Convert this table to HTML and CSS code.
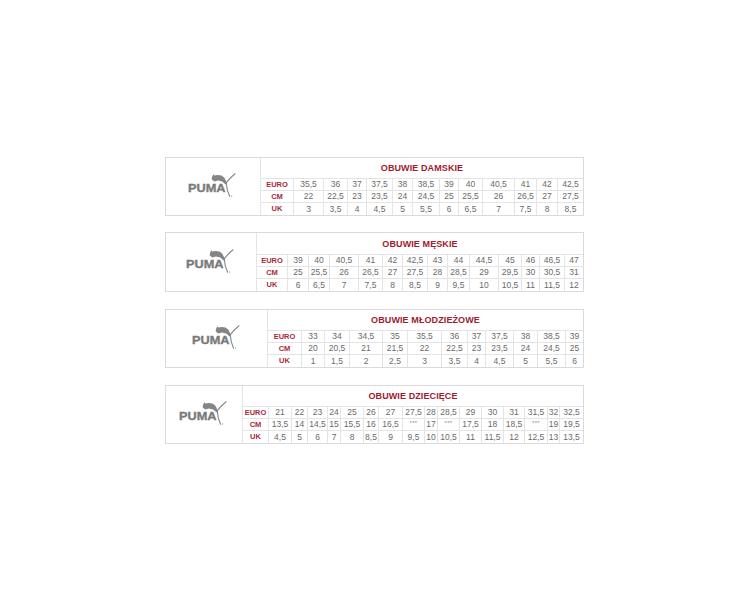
FILE: index.html
```html
<!DOCTYPE html>
<html lang="pl">
<head>
<meta charset="utf-8">
<title>PUMA – tabela rozmiarów</title>
<link rel="stylesheet" href="styles.css">
</head>
<body>
<div class="wrap">

  <div class="chart t1">
    <div class="logo">
      <svg class="puma" width="50" height="27" viewBox="0 0 50 27">
        <text x="0" y="18.9" textLength="37.5" lengthAdjust="spacingAndGlyphs" class="puma-text">PUMA</text>
        <path class="cat" d="M23.6,6.2 L24.2,3.4 L25.4,1.2 L26.4,2.6 L29.5,2.1 L33.4,2.6 L36.2,4.6 L39.2,10.2 L37.6,11.6 L34.2,8.4 L30,7.6 L26.2,8.4 Z"/>
        <path class="cat-line" d="M37.8,10.4 Q41.8,5 47,0.8"/>
        <path class="cat-line" d="M38.4,10.8 Q38.6,17 41.6,23.2"/>
        <circle class="reg" cx="43.6" cy="23" r="0.8"/>
      </svg>
    </div>
    <div class="title">OBUWIE DAMSKIE</div>
    <div class="lbl">EURO</div><div class="v">35,5</div><div class="v">36</div><div class="v">37</div><div class="v">37,5</div><div class="v">38</div><div class="v">38,5</div><div class="v">39</div><div class="v">40</div><div class="v">40,5</div><div class="v">41</div><div class="v">42</div><div class="v">42,5</div>
    <div class="lbl">CM</div><div class="v">22</div><div class="v">22,5</div><div class="v">23</div><div class="v">23,5</div><div class="v">24</div><div class="v">24,5</div><div class="v">25</div><div class="v">25,5</div><div class="v">26</div><div class="v">26,5</div><div class="v">27</div><div class="v">27,5</div>
    <div class="lbl">UK</div><div class="v">3</div><div class="v">3,5</div><div class="v">4</div><div class="v">4,5</div><div class="v">5</div><div class="v">5,5</div><div class="v">6</div><div class="v">6,5</div><div class="v">7</div><div class="v">7,5</div><div class="v">8</div><div class="v">8,5</div>
  </div>

  <div class="chart t2">
    <div class="logo">
      <svg class="puma" width="50" height="27" viewBox="0 0 50 27">
        <text x="0" y="18.9" textLength="37.5" lengthAdjust="spacingAndGlyphs" class="puma-text">PUMA</text>
        <path class="cat" d="M23.6,6.2 L24.2,3.4 L25.4,1.2 L26.4,2.6 L29.5,2.1 L33.4,2.6 L36.2,4.6 L39.2,10.2 L37.6,11.6 L34.2,8.4 L30,7.6 L26.2,8.4 Z"/>
        <path class="cat-line" d="M37.8,10.4 Q41.8,5 47,0.8"/>
        <path class="cat-line" d="M38.4,10.8 Q38.6,17 41.6,23.2"/>
        <circle class="reg" cx="43.6" cy="23" r="0.8"/>
      </svg>
    </div>
    <div class="title">OBUWIE MĘSKIE</div>
    <div class="lbl">EURO</div><div class="v">39</div><div class="v">40</div><div class="v">40,5</div><div class="v">41</div><div class="v">42</div><div class="v">42,5</div><div class="v">43</div><div class="v">44</div><div class="v">44,5</div><div class="v">45</div><div class="v">46</div><div class="v">46,5</div><div class="v">47</div>
    <div class="lbl">CM</div><div class="v">25</div><div class="v">25,5</div><div class="v">26</div><div class="v">26,5</div><div class="v">27</div><div class="v">27,5</div><div class="v">28</div><div class="v">28,5</div><div class="v">29</div><div class="v">29,5</div><div class="v">30</div><div class="v">30,5</div><div class="v">31</div>
    <div class="lbl">UK</div><div class="v">6</div><div class="v">6,5</div><div class="v">7</div><div class="v">7,5</div><div class="v">8</div><div class="v">8,5</div><div class="v">9</div><div class="v">9,5</div><div class="v">10</div><div class="v">10,5</div><div class="v">11</div><div class="v">11,5</div><div class="v">12</div>
  </div>

  <div class="chart t3">
    <div class="logo">
      <svg class="puma" width="50" height="27" viewBox="0 0 50 27">
        <text x="0" y="18.9" textLength="37.5" lengthAdjust="spacingAndGlyphs" class="puma-text">PUMA</text>
        <path class="cat" d="M23.6,6.2 L24.2,3.4 L25.4,1.2 L26.4,2.6 L29.5,2.1 L33.4,2.6 L36.2,4.6 L39.2,10.2 L37.6,11.6 L34.2,8.4 L30,7.6 L26.2,8.4 Z"/>
        <path class="cat-line" d="M37.8,10.4 Q41.8,5 47,0.8"/>
        <path class="cat-line" d="M38.4,10.8 Q38.6,17 41.6,23.2"/>
        <circle class="reg" cx="43.6" cy="23" r="0.8"/>
      </svg>
    </div>
    <div class="title">OBUWIE MŁODZIEŻOWE</div>
    <div class="lbl">EURO</div><div class="v">33</div><div class="v">34</div><div class="v">34,5</div><div class="v">35</div><div class="v">35,5</div><div class="v">36</div><div class="v">37</div><div class="v">37,5</div><div class="v">38</div><div class="v">38,5</div><div class="v">39</div>
    <div class="lbl">CM</div><div class="v">20</div><div class="v">20,5</div><div class="v">21</div><div class="v">21,5</div><div class="v">22</div><div class="v">22,5</div><div class="v">23</div><div class="v">23,5</div><div class="v">24</div><div class="v">24,5</div><div class="v">25</div>
    <div class="lbl">UK</div><div class="v">1</div><div class="v">1,5</div><div class="v">2</div><div class="v">2,5</div><div class="v">3</div><div class="v">3,5</div><div class="v">4</div><div class="v">4,5</div><div class="v">5</div><div class="v">5,5</div><div class="v">6</div>
  </div>

  <div class="chart t4">
    <div class="logo">
      <svg class="puma" width="50" height="27" viewBox="0 0 50 27">
        <text x="0" y="18.9" textLength="37.5" lengthAdjust="spacingAndGlyphs" class="puma-text">PUMA</text>
        <path class="cat" d="M23.6,6.2 L24.2,3.4 L25.4,1.2 L26.4,2.6 L29.5,2.1 L33.4,2.6 L36.2,4.6 L39.2,10.2 L37.6,11.6 L34.2,8.4 L30,7.6 L26.2,8.4 Z"/>
        <path class="cat-line" d="M37.8,10.4 Q41.8,5 47,0.8"/>
        <path class="cat-line" d="M38.4,10.8 Q38.6,17 41.6,23.2"/>
        <circle class="reg" cx="43.6" cy="23" r="0.8"/>
      </svg>
    </div>
    <div class="title">OBUWIE DZIECIĘCE</div>
    <div class="lbl">EURO</div><div class="v">21</div><div class="v">22</div><div class="v">23</div><div class="v">24</div><div class="v">25</div><div class="v">26</div><div class="v">27</div><div class="v">27,5</div><div class="v">28</div><div class="v">28,5</div><div class="v">29</div><div class="v">30</div><div class="v">31</div><div class="v">31,5</div><div class="v">32</div><div class="v">32,5</div>
    <div class="lbl">CM</div><div class="v">13,5</div><div class="v">14</div><div class="v">14,5</div><div class="v">15</div><div class="v">15,5</div><div class="v">16</div><div class="v">16,5</div><div class="v star">***</div><div class="v">17</div><div class="v star">***</div><div class="v">17,5</div><div class="v">18</div><div class="v">18,5</div><div class="v star">***</div><div class="v">19</div><div class="v">19,5</div>
    <div class="lbl">UK</div><div class="v">4,5</div><div class="v">5</div><div class="v">6</div><div class="v">7</div><div class="v">8</div><div class="v">8,5</div><div class="v">9</div><div class="v">9,5</div><div class="v">10</div><div class="v">10,5</div><div class="v">11</div><div class="v">11,5</div><div class="v">12</div><div class="v">12,5</div><div class="v">13</div><div class="v">13,5</div>
  </div>

</div>
</body>
</html>
```

FILE: styles.css
```css
html, body {
  margin: 0;
  padding: 0;
  background: #ffffff;
}

body {
  font-family: "Liberation Sans", Arial, sans-serif;
}

.wrap {
  display: flex;
  flex-direction: column;
  gap: 17px;
  padding: 157px 0 0 165px;
}

.chart {
  box-sizing: border-box;
  width: 419px;
  display: grid;
  gap: 1px;
  background: #e4e4e4;
  border: 1px solid #dadada;
}

.t1 {
  margin-bottom: -1px;
  grid-template-columns: 94px 32px 29px 23px 18px 25px 19px 26px 18px 23px 31px 21px 20px 25px;
  grid-template-rows: 20px 11px 11px 12px;
}

.t2 {
  grid-template-columns: 90px 30px 20px 20px 28px 23px 19px 24px 19px 21px 28px 22px 17px 24px 18px;
  grid-template-rows: 21px 11px 11px 12px;
}

.t3 {
  grid-template-columns: 101px 33px 22px 24px 32px 24px 33px 25px 17px 27px 23px 27px 17px;
  grid-template-rows: 20px 11px 11px 12px;
}

.t4 {
  grid-template-columns: 76px 25px 22px 15px 19px 12px 22px 14px 23px 21px 12px 21px 21px 21px 20px 22px 11px 23px;
  grid-template-rows: 20px 11px 11px 12px;
}

.chart > div {
  background: #ffffff;
  display: flex;
  align-items: center;
  justify-content: center;
  white-space: nowrap;
  overflow: hidden;
}

.logo {
  grid-column: 1;
  grid-row: 1 / 5;
}

.puma {
  display: block;
}

.puma-text {
  font-family: "Liberation Sans", Arial, sans-serif;
  font-weight: bold;
  font-size: 11.4px;
  fill: #7a7a7a;
  stroke: #7a7a7a;
  stroke-width: 0.35;
}

.cat {
  fill: #858585;
}

.cat-line {
  fill: none;
  stroke: #858585;
  stroke-width: 1.1;
  stroke-linecap: round;
}

.reg {
  fill: #b5b5b5;
}

.title {
  grid-row: 1;
  grid-column: 2 / -1;
  font-size: 9px;
  font-weight: bold;
  color: #a11a2d;
  letter-spacing: 0.1px;
}

.lbl {
  font-size: 7.5px;
  font-weight: bold;
  color: #a8283c;
  line-height: 1;
}

.v {
  font-size: 8.5px;
  color: #6a6a6a;
  line-height: 1;
}

.star {
  font-size: 6px;
  letter-spacing: 0.3px;
  color: #8a8a8a;
  padding-bottom: 3px;
}
```
